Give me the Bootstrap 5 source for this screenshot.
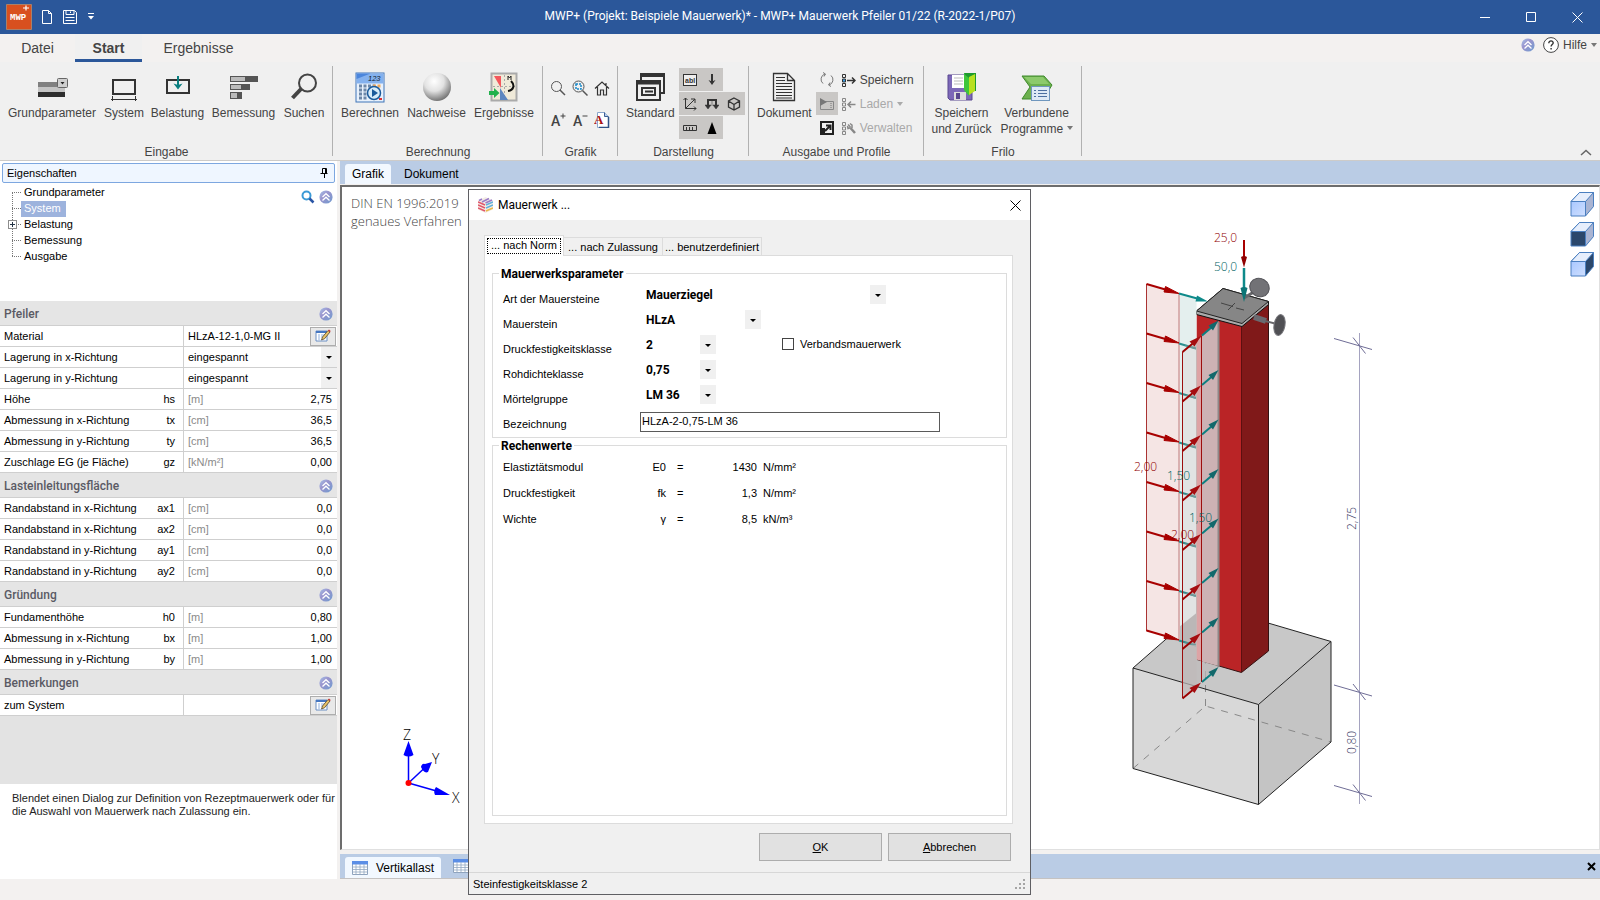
<!DOCTYPE html>
<html lang="de">
<head>
<meta charset="utf-8">
<meta name="viewport" content="width=device-width, initial-scale=1">
<title>MWP+ Mauerwerk Pfeiler</title>
<link href="https://cdn.jsdelivr.net/npm/bootstrap@5.3.0/dist/css/bootstrap.min.css" rel="stylesheet">
<style>
:root { --ui: "Liberation Sans", Arial, sans-serif; --rob: Roboto, "Liberation Sans", sans-serif; --seg: "Open Sans", "Noto Sans", sans-serif; }
html, body { height: 100%; }
body { font-family: var(--ui); font-size: 11px; line-height: 16px; color: #000; background: #f3f1f0; overflow: hidden; }
svg { display: block; flex: none; }
button { font: inherit; color: inherit; background: none; border: 0; padding: 0; white-space: nowrap; }
input, select { font: inherit; color: inherit; border: 0; border-radius: 0; background: transparent; padding: 0; min-width: 0; }
a { color: inherit; text-decoration: none; }
h1, h2, h3 { font: inherit; margin: 0; }

.titlebar { height: 34px; background: #2b579a; color: #fff; }
.quick { width: 98px; padding-left: 6px; gap: 9px; }
.apptitle { font-family: var(--rob); font-size: 12px; line-height: 32px; height: 34px; }
.winbtn { width: 46px; height: 34px; display: grid; place-items: center; }

.tabrow { height: 28px; color: #444; }
.tabrow .rtab { font-size: 14px; line-height: 22px; padding-top: 3px; border-bottom: 3px solid transparent; text-align: center; height: 28px; }
.tabrow .rtab.active { background: #f0f0f0; border-color: #2b579a; font-weight: 700; }
.w-datei { width: 75px; } .w-start { width: 67px; } .w-erg { width: 113px; }
.helpbox { font-size: 12px; padding: 0 3px 6px 0; }

.ribbon { background: #f0f0f0; height: 99px; padding-top: 4px; border-bottom: 1px solid #cdcbc9; color: #444; }
.rgroup { position: relative; display: flex; flex-direction: column; justify-content: space-between; flex: none; }
.rgroup::after { content: ""; position: absolute; right: 0; top: 0; bottom: 4px; width: 1px; background: #b1b1b1; }
.rgroup h2 { font-size: 12px; line-height: 16px; text-align: center; }
.rbtns { display: grid; }
.rbtn { display: flex; flex-direction: column; align-items: center; font-size: 12px; line-height: 16px; white-space: nowrap; padding-top: 3px; }
.rbtn .ic { height: 36px; display: grid; place-items: center; }
.rbtn .ic svg { width: 32px; height: 32px; }
.g1 { width: 333px; } .g1 .rbtns { grid-template-columns: 98px 46px 61px 71px 50px; padding-left: 3px; }
.g2 { width: 210px; } .g2 .rbtns { grid-template-columns: 66px 67px 68px; padding-left: 4px; }
.g3 { width: 75px; } .g3 .rbtns { grid-template-columns: 22px 22px 22px; grid-auto-rows: 32px; padding: 6px 0 0 4px; }
.g4 { width: 131px; } .g5 { width: 175px; }
.g6 { width: 158px; } .g6 .rbtns { grid-template-columns: 75px 75px; }
.g3 button, .tog button { display: grid; place-items: center; }
.tog { display: flex; flex-direction: column; gap: 1px; padding-top: 2px; }
.tog > div { display: flex; align-self: flex-start; background: #c9c7c5; }
.tog button { width: 22px; height: 23px; }
.tog.plain > div { background: none; }
.tog .on { background: #c9c7c5; }
.cmds { padding-top: 2px; margin-left: 4px; }
.small-cmd { display: flex; align-items: center; gap: 4px; height: 24px; font-size: 12px; }
.off { color: #a9a9a9; }

.side { width: 337px; background: #fff; flex: none; }
.panehead { margin: 2px 2px 1px; height: 20px; border: 1px solid #7da7e0; border-radius: 2px; background: #eff6ff; padding: 0 6px 0 4px; }
.treebox { height: 117px; }
.treetools { padding: 6px 4px 0 0; gap: 4px; }
.tree { list-style: none; margin: 0; padding: 0 0 0 21px; position: relative; }
.tree::before { content: ""; position: absolute; left: 12px; top: 8px; height: 64px; border-left: 1px dotted #777; }
.tree li { position: relative; height: 16px; }
.tree li::before { content: ""; position: absolute; left: -9px; top: 8px; width: 9px; border-top: 1px dotted #777; }
.tree a { display: inline-block; padding: 0 5px 0 3px; line-height: 15px; height: 16px; }
.tree a.active { background: #9db3dd; color: #fff; }
.tree .plus { position: absolute; left: -13px; top: 4px; width: 9px; height: 9px; border: 1px solid #8d8d8d; background: #fff; z-index: 1; }
.tree .plus::before { content: ""; position: absolute; left: 1px; right: 1px; top: 3px; height: 1px; background: #234; }
.tree .plus::after { content: ""; position: absolute; top: 1px; bottom: 1px; left: 3px; width: 1px; background: #234; }
.sec { height: 25px; background: #e5e5e5; border-bottom: 1px solid #cfcfcf; color: #5a5a64; font-family: var(--rob); font-size: 12px; font-weight: 500; padding: 2px 4px 0; }
.prop { display: flex; height: 21px; border-bottom: 1px solid #cfcfcf; background: #fff; line-height: 20px; }
.prop .pl { width: 184px; border-right: 1px solid #cfcfcf; padding: 0 8px 0 4px; display: flex; justify-content: space-between; flex: none; white-space: nowrap; }
.prop .pv { flex: 1; display: flex; align-items: center; padding: 0 5px 0 4px; min-width: 0; }
.prop .pv > span { color: #8a8a8a; flex: none; }
.prop input { flex: 1; text-align: right; width: 20px; }
.prop input.txt { text-align: left; }
.dd { appearance: none; background: linear-gradient(#f0f0f0, #f0f0f0) right/16px 100% no-repeat; }
.ddwrap { position: relative; display: flex; }
.ddwrap select { flex: 1; }
.ddwrap::after { content: ""; position: absolute; right: 5px; top: 50%; margin-top: -1px; border: 3px solid transparent; border-top-color: #000; border-bottom: 0; pointer-events: none; }
.editbtn { width: 26px; height: 19px; border: 1px solid #adadad; background: #e9e9e9; display: grid; place-items: center; margin-right: -4px; }
.help { height: 95px; padding: 8px 0 8px 12px; background: #fff; color: #222; line-height: 13px; }
.sidegap { background: #e3e3e3; }

.work { min-width: 0; margin-left: 3px; }
.strip { height: 23px; background: #bacce5; font-size: 12px; padding-left: 5px; }
.vtab { background: #f2f8ff; border-radius: 3px 3px 0 0; margin-top: 3px; padding: 0 7px; line-height: 20px; }
.strip .plain { padding: 0 7px; margin: 3px 0 0 6px; line-height: 20px; }
.canvas { border: 1px solid #e0e0e0; border-top: 2px solid #6d6d6d; border-left: 2px solid #6d6d6d; background: #fff; flex: 1; min-height: 0; margin-top: 1px; }
.norm { font-family: var(--seg); font-size: 13px; font-weight: 300; line-height: 18px; color: #444; padding: 7px 0 0 9px; white-space: nowrap; }
.leftcol { padding-bottom: 34px; }
.cubes { margin-left: 179px; padding: 4px 4px 0 0; }
.bottomstrip { height: 25px; background: #bacce5; border-bottom: 1px solid #c4c2c2; margin-top: 4px; font-size: 12px; padding-left: 5px; }

.dlg { position: absolute; left: 468px; top: 189px; width: 563px; height: 706px; border: 1px solid #5f5f63; background: #f0f0f0; display: flex; flex-direction: column; z-index: 5; }
.dlghead { height: 30px; background: #fff; padding: 0 9px; font-family: var(--rob); font-size: 12px; gap: 5px; }
.dtabs { height: 20px; margin: 15px 0 0 15px; display: flex; align-items: flex-end; position: relative; z-index: 1; }
.dtabs button { border: 1px solid #dcdcdc; border-left: 0; border-bottom: 0; height: 18px; line-height: 18px; width: 99px; text-align: center; }
.dtabs button.active { background: #fff; height: 21px; margin-bottom: -1px; width: 80px; border-left: 1px solid #dcdcdc; padding: 2px; }
.dtabs button.active span { display: block; border: 1px dotted #000; line-height: 13px; height: 16px; }
.dpane { margin: 0 17px 0 15px; border: 1px solid #dcdcdc; background: #fff; flex: 1; padding: 17px 5px 7px 7px; display: flex; flex-direction: column; gap: 7px; }
.gbox { border: 1px solid #dcdcdc; position: relative; padding-left: 10px; }
.gbox h3 { position: absolute; left: 6px; top: -8px; background: #fff; padding: 0 2px; font-family: var(--rob); font-weight: 700; font-size: 12px; line-height: 16px; }
.gb1 { height: 165px; padding-top: 9px; }
.gb2 { flex: 1; padding-top: 8px; }
.frow { display: flex; height: 25px; }
.frow > label:first-child { width: 137px; padding-top: 8px; }
.frow select { font-family: var(--rob); font-weight: 700; padding-left: 6px; height: 19px; font-size: 12px; }
.frow .ddwrap { height: 19px; margin-top: 2px; }
.s-xl { width: 246px; } .s-m { width: 121px; } .s-s { width: 76px; }
.bez { width: 300px; height: 20px; border: 1px solid #5a5a5a; padding: 0 1px 3px; margin-top: 4px; }
.chkline { height: 22px; padding-left: 66px; gap: 6px; }
.vrow { display: grid; grid-template-columns: 136px 27px 30px 61px 1fr; height: 26px; line-height: 26px; }
.vrow > :nth-child(2), .vrow > :nth-child(4) { text-align: right; }
.vrow > :nth-child(3) { padding-left: 11px; }
.vrow > :nth-child(5) { padding-left: 6px; }
.chk { appearance: none; width: 12px; height: 12px; border: 1px solid #444; background: #fff; margin: 0; }
.dbtns { gap: 6px; padding: 9px 19px 11px 0; }
.dbtn { width: 123px; height: 28px; background: #e1e1e1; border: 1px solid #adadad; }
.dstat { height: 22px; border-top: 1px solid #d7d7d7; padding: 0 4px; }
.statusline { height: 21px; }
.model text { font-family: var(--seg); font-size: 12px; font-weight: 300; }
.model .axname { font-size: 14px; }
</style>
</head>
<body class="d-flex flex-column">
<svg width="0" height="0" class="position-absolute" aria-hidden="true">
  <defs>
    <linearGradient id="cg" x1="0" y1="0" x2="1" y2="1"><stop offset="0" stop-color="#a5c4ea"/><stop offset=".4" stop-color="#9a94cd"/><stop offset="1" stop-color="#6f9cd0"/></linearGradient>
    <radialGradient id="ball" cx=".4" cy=".3" r=".7"><stop offset="0" stop-color="#fff"/><stop offset=".5" stop-color="#e2e2e2"/><stop offset="1" stop-color="#777"/></radialGradient>
    <linearGradient id="cube" x1="0" y1="0" x2="1" y2="1"><stop offset="0" stop-color="#a9c8ff"/><stop offset="1" stop-color="#cfdfff"/></linearGradient>
    <symbol id="chev" viewBox="0 0 14 14"><circle cx="7" cy="7" r="6.600" fill="url(#cg)"/><path d="M3.500 7 7 3.700 10.500 7M3.500 10.500 7 7.200 10.500 10.500" fill="none" stroke="#fff" stroke-width="1.300"/></symbol>
    <symbol id="edit" viewBox="0 0 16 14"><path d="M1 2h11v10H1z" fill="#fff" stroke="#6b8fc4"/><path d="M1 2h11v2H1z" fill="#4577c2"/><path d="M3 6h2M3 8h2M3 10h2M6 6h4M6 8h3" stroke="#8fb0e0"/><path d="m6.500 11 1-3L13 1.500l2 1.500-5.500 6.800z" fill="#e8c368" stroke="#54452a" stroke-width=".8"/><path d="m13 1.500 2 1.500.7-1L14 .5z" fill="#c33"/></symbol>
    <symbol id="grid" viewBox="0 0 16 14"><path d="M.5.5h15v13H.5z" fill="#fff" stroke="#8fa3bd"/><path d="M0 0h16v3.500H0z" fill="#5b8ee6"/><path d="M.5 6h15M.5 8.500h15M.5 11h15M4 3v11M8 3v11M12 3v11" stroke="#93a7c0" stroke-width=".8"/></symbol>
    <g id="ax"><path d="M1145.500 284l24 7" stroke="#a80000" stroke-width="2"/><path d="M1164.500 286.500l13.500 7-15-1.500z" fill="#a80000" stroke="#a80000"/></g>
    <g id="tx"><path d="M1178 294l17 5" stroke="#2a8f8f" stroke-width="2"/><path d="M1183 296l12 0v4z" fill="#9aa" opacity=".6"/></g>
    <g id="ay"><path d="M1181.500 352l12-10" stroke="#9c0000" stroke-width="2"/><path d="M1188.500 341.500l11.500-5.500-6.500 10.500z" fill="#a50d10"/><path d="M1201 335.500l10-8.500" stroke="#0b7f80" stroke-width="2"/><path d="M1207.500 325.500l10-5-5.500 10z" fill="#12686b"/></g>
    <g id="tick" stroke="#6f6d96" fill="none"><path d="M1333 338.500l38 11M1352 337.500l12.500 16"/></g>
  </defs>
</svg>

<header class="titlebar d-flex align-items-center">
  <div class="quick d-flex align-items-center">
    <svg width="26" height="26" viewBox="0 0 26 26"><path d="M.5.5h25v25H.5z" fill="#d8501f" stroke="#a8806a"/><text x="4" y="16" font-size="9" font-weight="700" fill="#fff" font-family="Liberation Mono, monospace">MWP</text><path d="M17 4h6M20 1.500v5" stroke="#fff" stroke-width="1.200"/></svg>
    <button aria-label="Neu"><svg width="12" height="16" viewBox="0 0 12 16" fill="none" stroke="#fff"><path d="M1.500 1.500h6l3 3v10h-9zM7.500 1.500v3h3"/></svg></button>
    <button aria-label="Speichern"><svg width="16" height="16" viewBox="0 0 16 16" fill="none" stroke="#fff"><path d="M1.500 1.500h11l2 2v11h-13zM4 1.500v4h8v-4M8.500 2.500v1.500M3.500 8.500h9M3.500 11.500h9"/></svg></button>
    <button aria-label="Anpassen"><svg width="8" height="8" viewBox="0 0 8 8"><path d="M1 .5h6" stroke="#fff"/><path d="M1 3h6L4 6.500z" fill="#fff"/></svg></button>
  </div>
  <h1 class="apptitle flex-fill text-center">MWP+ (Projekt: Beispiele Mauerwerk)* - MWP+ Mauerwerk Pfeiler 01/22 (R-2022-1/P07)</h1>
  <div class="d-flex">
    <button class="winbtn" aria-label="Minimieren"><svg width="11" height="11"><path d="M0 5.500h10" stroke="#fff"/></svg></button>
    <button class="winbtn" aria-label="Maximieren"><svg width="11" height="11"><path d="M.5.5h9v9h-9z" stroke="#fff" fill="none"/></svg></button>
    <button class="winbtn" aria-label="Schließen"><svg width="11" height="11"><path d="M.5.5l10 10M10.500.5l-10 10" stroke="#fff"/></svg></button>
  </div>
</header>

<nav class="tabrow d-flex">
  <a href="#" class="rtab w-datei">Datei</a><a href="#" class="rtab active w-start">Start</a><a href="#" class="rtab w-erg">Ergebnisse</a>
  <div class="helpbox ms-auto d-flex align-items-center gap-1">
    <svg class="me-1" width="14" height="14"><use href="#chev"/></svg>
    <button class="d-flex align-items-center"><svg class="me-1" width="16" height="16" viewBox="0 0 16 16"><circle cx="8" cy="8" r="7.400" fill="#fff" stroke="#444"/><path d="M5.800 6.200C5.800 3 10.300 3.300 10.200 6 10 7.600 8.100 7.700 8.100 9.600M8.100 11v1.500" stroke="#333" stroke-width="1.400" fill="none"/></svg>Hilfe
    <svg class="ms-1" width="6" height="4"><path d="M0 0h6L3 4z" fill="#777"/></svg></button>
  </div>
</nav>

<section class="ribbon d-flex">
  <div class="rgroup g1"><div class="rbtns">
    <button class="rbtn"><span class="ic"><svg viewBox="0 0 32 32"><path d="M2 11h27v5H2z" fill="#808080"/><path d="M2 16h27v5H2z" fill="#c4c4c4"/><path d="M2 21h27v5H2z" fill="#2d2d2d"/><rect x="21.500" y="7.500" width="10" height="9" rx="1" fill="#cfcfcf" stroke="#666"/><path d="M24.500 11h4l-2 2.500z" fill="#222"/></svg></span>Grundparameter</button>
    <button class="rbtn"><span class="ic"><svg viewBox="0 0 32 32" fill="none" stroke="#333"><path d="M5 9h22v14H5z" stroke-width="2"/><path d="M4.500 25v5M27.500 25v5M3 28.500h26"/></svg></span>System</button>
    <button class="rbtn"><span class="ic"><svg viewBox="0 0 32 32"><path d="M5 9h22v13H5z" stroke-width="2" fill="none" stroke="#333"/><path d="M16 5v10" stroke="#0a7f80" stroke-width="2"/><path d="M11.500 12.500l4.500 1.500 4.500-1.500-4.500 6z" fill="#0a7f80"/></svg></span>Belastung</button>
    <button class="rbtn"><span class="ic"><svg viewBox="0 0 32 32"><path d="M2 5h28v6H2zM2 13h20v6H2zM2 21h12v7H2z" fill="#555"/><path d="M3 6h14v4H3zM3 14h10v4H3zM3 22h6v5H3z" fill="#bbb"/></svg></span>Bemessung</button>
    <button class="rbtn"><span class="ic"><svg viewBox="0 0 32 32" fill="none" stroke="#444"><circle cx="19.500" cy="12" r="8.500" stroke-width="2"/><path d="M13 18l-8.500 9" stroke-width="4"/></svg></span>Suchen</button>
  </div><h2>Eingabe</h2></div>
  <div class="rgroup g2"><div class="rbtns">
    <button class="rbtn"><span class="ic"><svg viewBox="0 0 32 32"><rect x="2" y="2" width="28" height="29" fill="#e8f1fc" stroke="#3f74b8"/><path d="M2.500 2.500h27v10h-27z" fill="#84b1ee"/><path d="M2.500 8l14-5.500h-14z" fill="#4b86dc"/><text x="14" y="10" font-size="7.500" font-style="italic" fill="#123" font-family="Liberation Sans">123</text><path d="M5 15h16M5 19h8M5 23h8M5 27h8" stroke="#6d87a8" stroke-width="3" stroke-dasharray="3 1.500"/><path d="M19 15h9" stroke="#f0a95c" stroke-width="3" stroke-dasharray="3 1.500"/><circle cx="20" cy="22" r="6.500" fill="#d7ecfa" stroke="#1b5b9b" stroke-width="1.500"/><path d="M18 18l6 4-6 4z" fill="#1b5b9b"/><path d="M25 27h3v2h-3z" fill="#d33"/></svg></span>Berechnen</button>
    <button class="rbtn"><span class="ic"><svg viewBox="0 0 32 32"><circle cx="16" cy="16" r="14" fill="url(#ball)"/></svg></span>Nachweise</button>
    <button class="rbtn"><span class="ic"><svg viewBox="0 0 32 32"><rect x="3.500" y="2.500" width="25" height="27" fill="#f0ead9" stroke="#aaa" stroke-width="2"/><path d="M5 15.500h23M16.500 4v25" stroke="#aaa" stroke-dasharray="2 2"/><path d="M6 5h7v12z" fill="#f4575c"/><path d="M12 17v12h8z" fill="#5d86c0"/><path d="M20 9V5l1.500 2L23 5v4" stroke="#222" fill="none"/><path d="M23 10c4 4 3 9-3 10" stroke="#111" stroke-width="2" fill="none"/><path d="M1 20h5v-3l5.500 5-5.500 5v-3H1z" fill="#22b14c"/></svg></span>Ergebnisse</button>
  </div><h2>Berechnung</h2></div>
  <div class="rgroup g3"><div class="rbtns">
    <button aria-label="Zoom"><svg width="16" height="16" fill="none" stroke="#555"><circle cx="6.500" cy="6.500" r="5"/><path d="M10 10l5 5" stroke-width="1.500"/></svg></button>
    <button aria-label="Zoom Fenster"><svg width="16" height="16" fill="none" stroke="#555"><circle cx="6.500" cy="6.500" r="5.500"/><path d="M10.500 10.500l5 5" stroke-width="1.500"/><rect x="4" y="4" width="5" height="5" stroke="#1888c8" stroke-width="1.500" stroke-dasharray="2 1"/></svg></button>
    <button aria-label="Alles"><svg width="16" height="16" fill="none" stroke="#333" stroke-width="1.200"><path d="M1 8.500L8 2l7 6.500M3.500 7v8h3v-5h3v5h3V7M12 3v2"/></svg></button>
    <button aria-label="Schrift größer"><svg width="16" height="16"><text x="1" y="14" font-size="14" font-weight="500" fill="#444" font-family="Roboto">A</text><path d="M10.500 4h5M13 1.500v5" stroke="#444"/></svg></button>
    <button aria-label="Schrift kleiner"><svg width="16" height="16"><text x="1" y="14" font-size="14" font-weight="500" fill="#444" font-family="Roboto">A</text><path d="M10.500 4h5" stroke="#444"/></svg></button>
    <button aria-label="Schriftart"><svg width="16" height="16"><path d="M3.500.5h7l4 4v11h-11z" fill="#fff" stroke="#8aa6cc"/><path d="M10.500.5v4h4" fill="#b8cce8" stroke="#3a5f95"/><path d="M14.500 5v10.500H5" fill="none" stroke="#2f5288" stroke-width="1.500"/><text x="0" y="12" font-size="13" font-weight="700" fill="#a11" font-family="Liberation Serif">A</text></svg></button>
  </div><h2>Grafik</h2></div>
  <div class="rgroup g4"><div class="d-flex">
    <button class="rbtn px-1 ms-1"><span class="ic"><svg viewBox="0 0 32 32" fill="none" stroke="#333"><path d="M7 10V3h23v19h-4" stroke-width="2"/><path d="M7 4.500h23" stroke-width="3"/><path d="M3 10h23v19H3z" stroke-width="2"/><path d="M3 12h23" stroke-width="3"/><path d="M8 17h13v7H8zM11 20.500h8" stroke-width="2"/></svg></span>Standard</button>
    <div class="tog ms-auto me-1">
      <div><button aria-label="Texte"><svg width="14" height="14"><rect x=".5" y="1.500" width="13" height="11" fill="#eee" stroke="#333"/><text x="2" y="10" font-size="7" font-weight="700" fill="#333" font-family="Liberation Sans">abl</text></svg></button><button aria-label="Lasten"><svg width="14" height="14"><path d="M7 1v8" stroke="#333" stroke-width="2"/><path d="M3.500 7L7 12l3.500-5L7 8.500z" fill="#333"/></svg></button></div>
      <div><button aria-label="Achsen"><svg width="14" height="14" fill="none" stroke="#333"><path d="M2.500 1v10.500H13M2.500 11.500L12 2M8 2h4v4M.5 3l2-2 2 2M11 9.500l2 2-2 2"/></svg></button><button aria-label="Lager"><svg width="14" height="14"><path d="M3 9V3h8v6" stroke="#333" stroke-width="2" fill="none"/><path d="M0 8h6l-3 4zM8 8h6l-3 4zM7 4v5" fill="#333" stroke="#333" stroke-width=".5"/></svg></button><button aria-label="Körper"><svg width="14" height="14" fill="none" stroke="#333" stroke-width="1.300"><path d="M7 1l5.500 3v6L7 13l-5.500-3V4zM1.500 4L7 7.500 12.500 4M7 7.500V13"/></svg></button></div>
      <div><button aria-label="Maße"><svg width="14" height="14" fill="none" stroke="#333"><path d="M.5 4.500h13v5H.5zM3.500 6v3M6.500 6v3M9.500 6v3"/></svg></button><button aria-label="Ansicht"><svg width="14" height="14"><path d="M7 1l4.500 12h-9z" fill="#000"/></svg></button></div>
    </div>
  </div><h2>Darstellung</h2></div>
  <div class="rgroup g5"><div class="d-flex">
    <button class="rbtn ms-1 px-1"><span class="ic"><svg viewBox="0 0 32 32" fill="none" stroke="#333"><path d="M5.500 2.500h14l7 7v20h-21zM19.500 2.500v7h7" stroke-width="1.300"/><path d="M8 6.500h9M8 9.500h9M8 12.500h16M8 15.500h16M8 18.500h16M8 21.500h16M8 24.500h16M8 27h16"/></svg></span>Dokument</button>
    <div class="tog plain">
      <div><button aria-label="Aktualisieren"><svg width="14" height="15" fill="none" stroke="#777"><path d="M5 2a5.500 5.500 0 0 0-2 9.500M9 13a5.500 5.500 0 0 0 2-9.500M3 .5l2.500 1.500L4 4.500M11 14.500L8.500 13 10 10.500"/></svg></button></div>
      <div><button class="on" aria-label="Vorschau"><svg width="14" height="12"><path d="M.5 3.500h13v8H.5z" fill="none" stroke="#888"/><path d="M0 0l7 4-7 4z" fill="#777"/><path d="M11 5v5" stroke="#777" stroke-dasharray="1 1"/></svg></button></div>
      <div><button aria-label="Extern"><svg width="14" height="14"><path d="M1 1h12v12H1z" fill="none" stroke="#222" stroke-width="2"/><path d="M5 10l5-5M6 4.500h4.500V9" stroke="#222" stroke-width="2" fill="none"/><path d="M0 7h5v7H0z" fill="#222"/></svg></button></div>
    </div>
    <div class="cmds d-flex flex-column">
      <button class="small-cmd"><svg width="14" height="13" viewBox="0 0 14 13"><path d="M.5.5h3v3h-3zM.5 9.500h3v3h-3z" fill="none" stroke="#333"/><path d="M.5 5h3v3h-3z" fill="#3aa0e8" stroke="#333"/><path d="M5 6.500h8M10 3.500l3 3-3 3" stroke="#333" stroke-width="1.500" fill="none"/></svg>Speichern</button>
      <button class="small-cmd off"><svg width="14" height="13" viewBox="0 0 14 13" fill="none" stroke="#888"><path d="M.5.5h3v3h-3zM.5 5h3v3h-3zM.5 9.500h3v3h-3z"/><path d="M5.500 6.500h8M9 3.500l-3 3 3 3" stroke-width="1.500"/></svg>Laden<svg width="6" height="4"><path d="M0 0h6L3 4z" fill="#aaa"/></svg></button>
      <button class="small-cmd off"><svg width="14" height="13" viewBox="0 0 14 13" fill="none" stroke="#888"><path d="M.5.5h3v3h-3zM.5 5h3v3h-3zM.5 9.500h3v3h-3z"/><path d="M8.500 6l4.500 5" stroke-width="2.500"/><path d="M6 2.500l2 2V6L6 6.500 5.500 4M8 1.500l2 1.500v3" stroke-width="1.500"/></svg>Verwalten</button>
    </div>
  </div><h2>Ausgabe und Profile</h2></div>
  <div class="rgroup g6"><div class="rbtns">
    <button class="rbtn"><span class="ic"><svg viewBox="0 0 32 32"><path d="M2 4h24v25H4l-2-2z" fill="#7c68b8" stroke="#59478f"/><path d="M6 4h16v13H6z" fill="#fff"/><path d="M8 7h9M8 10h9M8 13h9" stroke="#bbb"/><path d="M8 21h12v8H8z" fill="#ddd"/><path d="M10 22h4v6h-4z" fill="#59478f"/><path d="M18 2h12v18h-8z" fill="#1e9b2d"/><path d="M18 3l5 4v18l-5-6z" fill="#3ec63a"/><path d="M23 6l6-3v17l-6 4z" fill="#b8e020"/></svg></span><span class="text-center">Speichern<br>und Zurück</span></button>
    <button class="rbtn"><span class="ic"><svg viewBox="0 0 32 32"><path d="M1 5h22l8 9-3 5H13v9H1l8-12z" fill="#6cb04e" stroke="#3f8a2c"/><path d="M3 6h19l6 7H10z" fill="#8cca6c"/><rect x="10.500" y="15.500" width="18" height="14" fill="#dce9f5" stroke="#6f96bd"/><path d="M13 19.500h2M17 19.500h9M13 22.500h2M17 22.500h9M13 25.500h2M17 25.500h9" stroke="#4a6fa0"/></svg></span><span class="text-center">Verbundene<br>Programme <svg class="d-inline" width="6" height="8"><path d="M0 0h6L3 4z" fill="#777"/></svg></span></button>
  </div><h2>Frilo</h2></div>
  <button class="ms-auto align-self-end me-2 pb-1" aria-label="Menüband einklappen"><svg width="12" height="7"><path d="M1 6l5-4.500L11 6" fill="none" stroke="#666" stroke-width="1.500"/></svg></button>
</section>

<main class="d-flex flex-fill overflow-hidden">
  <aside class="side d-flex flex-column">
    <div class="panehead d-flex justify-content-between align-items-center"><h2>Eigenschaften</h2><button aria-label="Anheften"><svg width="8" height="11" fill="none" stroke="#000"><path d="M2.500.5h4v5h-4zM5.500.5v5M.5 5.500h7M4.500 5.500V10"/></svg></button></div>
    <div class="treebox d-flex justify-content-between">
      <ul class="tree">
        <li><a href="#">Grundparameter</a></li><li><a href="#" class="active">System</a></li><li><span class="plus"></span><a href="#">Belastung</a></li><li><a href="#">Bemessung</a></li><li><a href="#">Ausgabe</a></li>
      </ul>
      <div class="treetools d-flex"><svg width="14" height="14" viewBox="0 0 14 14" fill="none"><circle cx="5.500" cy="5.500" r="4" stroke="#3b9ad6" stroke-width="2"/><path d="M8.500 8.500l4 4" stroke="#2a55a5" stroke-width="2.500"/></svg><svg width="14" height="14"><use href="#chev"/></svg></div>
    </div>
    <div class="sec d-flex justify-content-between align-items-center"><span>Pfeiler</span><svg width="14" height="14"><use href="#chev"/></svg></div>
    <div class="prop"><label class="pl" for="p1">Material</label><div class="pv"><input class="txt" id="p1" value="HLzA-12-1,0-MG II"><button class="editbtn" aria-label="Material bearbeiten"><svg width="16" height="14"><use href="#edit"/></svg></button></div></div>
    <div class="prop"><label class="pl" for="p2">Lagerung in x-Richtung</label><div class="pv ddwrap pe-0"><select id="p2" class="dd h-100"><option>eingespannt</option></select></div></div>
    <div class="prop"><label class="pl" for="p3">Lagerung in y-Richtung</label><div class="pv ddwrap pe-0"><select id="p3" class="dd h-100"><option>eingespannt</option></select></div></div>
    <div class="prop"><label class="pl" for="p4">Höhe<span>hs</span></label><div class="pv"><span>[m]</span><input id="p4" value="2,75"></div></div>
    <div class="prop"><label class="pl" for="p5">Abmessung in x-Richtung<span>tx</span></label><div class="pv"><span>[cm]</span><input id="p5" value="36,5"></div></div>
    <div class="prop"><label class="pl" for="p6">Abmessung in y-Richtung<span>ty</span></label><div class="pv"><span>[cm]</span><input id="p6" value="36,5"></div></div>
    <div class="prop"><label class="pl" for="p7">Zuschlage EG (je Fläche)<span>gz</span></label><div class="pv"><span>[kN/m²]</span><input id="p7" value="0,00"></div></div>
    <div class="sec d-flex justify-content-between align-items-center"><span>Lasteinleitungsfläche</span><svg width="14" height="14"><use href="#chev"/></svg></div>
    <div class="prop"><label class="pl" for="p8">Randabstand in x-Richtung<span>ax1</span></label><div class="pv"><span>[cm]</span><input id="p8" value="0,0"></div></div>
    <div class="prop"><label class="pl" for="p9">Randabstand in x-Richtung<span>ax2</span></label><div class="pv"><span>[cm]</span><input id="p9" value="0,0"></div></div>
    <div class="prop"><label class="pl" for="p10">Randabstand in y-Richtung<span>ay1</span></label><div class="pv"><span>[cm]</span><input id="p10" value="0,0"></div></div>
    <div class="prop"><label class="pl" for="p11">Randabstand in y-Richtung<span>ay2</span></label><div class="pv"><span>[cm]</span><input id="p11" value="0,0"></div></div>
    <div class="sec d-flex justify-content-between align-items-center"><span>Gründung</span><svg width="14" height="14"><use href="#chev"/></svg></div>
    <div class="prop"><label class="pl" for="p12">Fundamenthöhe<span>h0</span></label><div class="pv"><span>[m]</span><input id="p12" value="0,80"></div></div>
    <div class="prop"><label class="pl" for="p13">Abmessung in x-Richtung<span>bx</span></label><div class="pv"><span>[m]</span><input id="p13" value="1,00"></div></div>
    <div class="prop"><label class="pl" for="p14">Abmessung in y-Richtung<span>by</span></label><div class="pv"><span>[m]</span><input id="p14" value="1,00"></div></div>
    <div class="sec d-flex justify-content-between align-items-center"><span>Bemerkungen</span><svg width="14" height="14"><use href="#chev"/></svg></div>
    <div class="prop"><label class="pl" for="p15">zum System</label><div class="pv"><input class="txt" id="p15" value=""><button class="editbtn" aria-label="Bemerkung bearbeiten"><svg width="16" height="14"><use href="#edit"/></svg></button></div></div>
    <div class="sidegap flex-fill"></div>
    <p class="help mb-0">Blendet einen Dialog zur Definition von Rezeptmauerwerk oder für die Auswahl von Mauerwerk nach Zulassung ein.</p>
  </aside>

  <section class="work d-flex flex-column flex-fill">
    <div class="strip d-flex"><a href="#" class="vtab">Grafik</a><a href="#" class="plain">Dokument</a></div>
    <div class="canvas d-flex">
      <div class="leftcol d-flex flex-column justify-content-between">
        <div class="norm">DIN EN 1996:2019<br>genaues Verfahren</div>
        <svg class="model ms-5" width="80" height="90" viewBox="390 725 80 90"><g fill="none" stroke="#00f" stroke-width="1.500"><path d="M408.500 783v-30M408.500 783l28 8M408.500 783l16-15"/></g><path d="M408.500 741l5 14q-5 3-10 0zM432 762l-4 10q-4 2-7-5 1-4 4-3zM450 795l-14-8q-3 4-1 8z" fill="#00f"/><circle cx="408.500" cy="783" r="3" fill="#f00"/><text class="axname" x="403" y="740">Z</text><text class="axname" x="432" y="764">Y</text><text class="axname" x="452" y="803">X</text></svg>
      </div>
      <svg class="model ms-auto mt-4" width="270" height="600" viewBox="1120 211 270 600">
        <path d="M1132 668l72.500-63L1330 641.500l-72.500 63z" fill="#c8c8c8"/>
        <path d="M1132 668l125.500 36.500v100L1132 768.500z" fill="#d8d8d8"/>
        <path d="M1257.500 704.500l72.500-63V742l-72.500 62.500z" fill="#c4c4c4"/>
        <path d="M1132 768.500l72.500-62.500 125.500 36M1204.500 706v-50" fill="none" stroke="#888" stroke-dasharray="7 7"/>
        <path d="M1267 623l63 18.500-72.500 63L1132 668l40-35M1132 668v100.500l125.500 36v-100M1257.500 804.500L1330 742V641.500" fill="none" stroke="#222"/>
        <path d="M1195.500 312l45 14v346.500l-45-13z" fill="#ba2426"/>
        <path d="M1240.500 326l27-22v347l-27 21.500z" fill="#801919"/>
        <path d="M1195.500 659.500l45 13 27-21.500V304" fill="none" stroke="#311"/>
        <path d="M1240.500 326v346" stroke="#5d1010"/>
        <path d="M1195.500 311l26.500-22.500 45.500 13v3l-26.500 22-45.500-12z" fill="#aaa" stroke="#111"/>
        <path d="M1195.500 311l26.500-22.500 45.500 13-26.500 22z" fill="#868686" stroke="#222"/>
        <path d="M1220 303l12 3.500M1235 308l8 2M1227 310l7-7" stroke="#444"/>
        <path d="M1145.500 284l32.500 9.500v346l-32.500-9z" fill="#f5e5e4"/>
        <path d="M1178 293.500l17.500 5V645l-17.500-5z" fill="#e4efee"/>
        <path d="M1178 627l17.500-14V645l-17.500-5z" fill="#bcc0c0"/>
        <path d="M1145.500 284v347" stroke="#a33"/><path d="M1178 294v346" stroke="#d9b0b0" stroke-width="2"/>
        <g><use href="#ax"/><use href="#ax" y="49.500"/><use href="#ax" y="99"/><use href="#ax" y="148.500"/><use href="#ax" y="198"/><use href="#ax" y="247.500"/><use href="#ax" y="297"/><use href="#ax" y="346.500"/></g>
        <g><use href="#tx" y="49.500"/><use href="#tx" y="99"/><use href="#tx" y="148.500"/><use href="#tx" y="198"/><use href="#tx" y="247.500"/><use href="#tx" y="297"/><use href="#tx" y="346.500"/></g>
        <path d="M1178 293.500l20 5.500" stroke="#0e8a8a" stroke-width="2"/><path d="M1196 295.500l11 6h-12.500z" fill="#0e8a8a"/>
        <path d="M1181.500 352l14-11.500V686l-14 12z" fill="#b33" opacity=".06"/>
        <path d="M1195.500 341l5-4.500V661l-5-1.500z" fill="#dda3a5"/>
        <path d="M1200.500 336l17-15v345l-17-4.500z" fill="#cdb2b4"/>
        <path d="M1181.500 645h14v15l22 6-36 31z" fill="#bdb9b9" opacity=".7"/>
        <path d="M1195.500 341v319" stroke="#c8b5b5"/><path d="M1217.500 322v345" stroke="#8e8787" stroke-width="2"/>
        <path d="M1181.500 352v346M1200.500 336v346" stroke="#9c0d0d"/>
        <g><use href="#ay"/><use href="#ay" y="49.500"/><use href="#ay" y="99"/><use href="#ay" y="148.500"/><use href="#ay" y="198"/><use href="#ay" y="247.500"/><use href="#ay" y="297"/><use href="#ay" y="346.500"/></g>
        <path d="M1256 290l-13 8" stroke="#66666a" stroke-width="3"/><ellipse cx="1258.500" cy="287.500" rx="10" ry="9" fill="#727276" stroke="#55555a" transform="rotate(30 1258.500 287.500)"/>
        <path d="M1253 317l12 4" stroke="#6a6a70" stroke-width="6"/><path d="M1264 321l12 3" stroke="#66666a" stroke-width="2"/><ellipse cx="1278.500" cy="325" rx="5.500" ry="10.500" fill="#505054" stroke="#77777c" transform="rotate(10 1278.500 325)"/>
        <path d="M1243 240v20" stroke="#a80000" stroke-width="2"/><path d="M1240 257q3-2 6 0l-3 10.500z" fill="#8f0000"/>
        <path d="M1243 268v22" stroke="#0e8a8a" stroke-width="2.500"/><path d="M1239.500 288q3.500-2 7 0l-3.500 14z" fill="#0c7576"/>
        <path d="M1358.500 333v471" stroke="#a5a3c0"/>
        <use href="#tick"/><use href="#tick" y="346.500"/><use href="#tick" y="447"/>
        <g fill="#8f0000"><text x="1213" y="242">25,0</text><text x="1133" y="471">2,00</text><text x="1170" y="539">2,00</text></g>
        <g fill="#006464"><text x="1213" y="271">50,0</text><text x="1166" y="480">1,50</text><text x="1188" y="522">1,50</text></g>
        <g fill="#3c3a66"><text transform="translate(1355 530) rotate(-90)">2,75</text><text transform="translate(1355 754) rotate(-90)">0,80</text></g>
      </svg>
      <div class="cubes d-flex flex-column gap-1">
        <svg width="25" height="26" viewBox="0 0 25 26" stroke="#4a7fc0"><path d="M1 10.500L9.500 1.500h14v14L15.500 25V10.500z" fill="#a9b4d2"/><path d="M1 10.500L9.500 1.500h14L15.500 10.500z" fill="#e6eefc"/><path d="M1 10.500h14.500V25H1z" fill="url(#cube)"/></svg>
        <svg width="25" height="26" viewBox="0 0 25 26" stroke="#4a7fc0"><path d="M1 10.500L9.500 1.500h14v14L15.500 25V10.500z" fill="#a9b4d2"/><path d="M1 10.500L9.500 1.500h14L15.500 10.500z" fill="#e6eefc"/><path d="M1 10.500h14.500V25H1z" fill="#2b476b"/></svg>
        <svg width="25" height="26" viewBox="0 0 25 26" stroke="#4a7fc0"><path d="M1 10.500L9.500 1.500h14v14L15.500 25V10.500z" fill="#2b476b"/><path d="M1 10.500L9.500 1.500h14L15.500 10.500z" fill="#e6eefc"/><path d="M1 10.500h14.500V25H1z" fill="url(#cube)"/></svg>
      </div>
    </div>
    <div class="bottomstrip d-flex">
      <a href="#" class="vtab d-flex align-items-center gap-2"><svg width="16" height="14"><use href="#grid"/></svg>Vertikallast</a>
      <a href="#" class="d-flex align-items-center ps-2 ms-1" aria-label="Horizontallast"><svg width="16" height="14"><use href="#grid"/></svg></a>
      <button class="ms-auto me-1" aria-label="Schließen"><svg width="9" height="9"><path d="M1 1l7 7M8 1L1 8" stroke="#000" stroke-width="2"/></svg></button>
    </div>
  </section>
</main>
<footer class="statusline"></footer>

<div class="dlg" role="dialog" aria-labelledby="dt">
  <div class="dlghead d-flex align-items-center"><svg width="15" height="16" viewBox="0 0 15 16"><path d="M0 3.500L7.500 0 15 3.500v9L7.500 16 0 12.500z" fill="#f4ece4"/><path d="M1 3.500l3-1.500M4 5l7-3.500M7.500 6L14 3" stroke="#9a7cc8" stroke-width="1.500"/><path d="M0 5l7 3M0 8l7 3M0 11l7 3" stroke="#e0566a" stroke-width="1.500"/><path d="M8 8l7-3M8 11l7-3" stroke="#5fb0dd" stroke-width="1.500"/><path d="M8 14l7-3" stroke="#e8b84a" stroke-width="1.500"/></svg><h2 id="dt">Mauerwerk ...</h2><button class="ms-auto" aria-label="Schließen"><svg width="11" height="11"><path d="M.5.5l10 10M10.500.5l-10 10" stroke="#000"/></svg></button></div>
  <div class="dtabs"><button class="active"><span>... nach Norm</span></button><button>... nach Zulassung</button><button>... benutzerdefiniert</button></div>
  <div class="dpane">
    <div class="gbox gb1"><h3>Mauerwerksparameter</h3>
      <div class="frow"><label for="d1">Art der Mauersteine</label><div class="ddwrap s-xl"><select id="d1" class="dd"><option>Mauerziegel</option></select></div></div>
      <div class="frow"><label for="d2">Mauerstein</label><div class="ddwrap s-m"><select id="d2" class="dd"><option>HLzA</option></select></div></div>
      <div class="frow"><label for="d3">Druckfestigkeitsklasse</label><div class="ddwrap s-s"><select id="d3" class="dd"><option>2</option></select></div><div class="chkline d-flex align-items-center"><input type="checkbox" class="chk" id="vb"><label for="vb">Verbandsmauerwerk</label></div></div>
      <div class="frow"><label for="d4">Rohdichteklasse</label><div class="ddwrap s-s"><select id="d4" class="dd"><option>0,75</option></select></div></div>
      <div class="frow"><label for="d5">Mörtelgruppe</label><div class="ddwrap s-s"><select id="d5" class="dd"><option>LM 36</option></select></div></div>
      <div class="frow"><label for="d6">Bezeichnung</label><input id="d6" class="bez" value="HLzA-2-0,75-LM 36"></div>
    </div>
    <div class="gbox gb2"><h3>Rechenwerte</h3>
      <div class="vrow"><span>Elastiztätsmodul</span><span>E0</span><span>=</span><span>1430</span><span>N/mm²</span></div>
      <div class="vrow"><span>Druckfestigkeit</span><span>fk</span><span>=</span><span>1,3</span><span>N/mm²</span></div>
      <div class="vrow"><span>Wichte</span><span>γ</span><span>=</span><span>8,5</span><span>kN/m³</span></div>
    </div>
  </div>
  <div class="dbtns d-flex justify-content-end"><button class="dbtn"><u>O</u>K</button><button class="dbtn"><u>A</u>bbrechen</button></div>
  <div class="dstat d-flex justify-content-between align-items-center"><span>Steinfestigkeitsklasse 2</span><svg width="12" height="12" fill="#a5a5a5"><path d="M9 1h2v2H9zM9 5h2v2H9zM9 9h2v2H9zM5 5h2v2H5zM5 9h2v2H5zM1 9h2v2H1z"/></svg></div>
</div>
<script src="https://cdn.jsdelivr.net/npm/bootstrap@5.3.0/dist/js/bootstrap.bundle.min.js"></script>
</body>
</html>
